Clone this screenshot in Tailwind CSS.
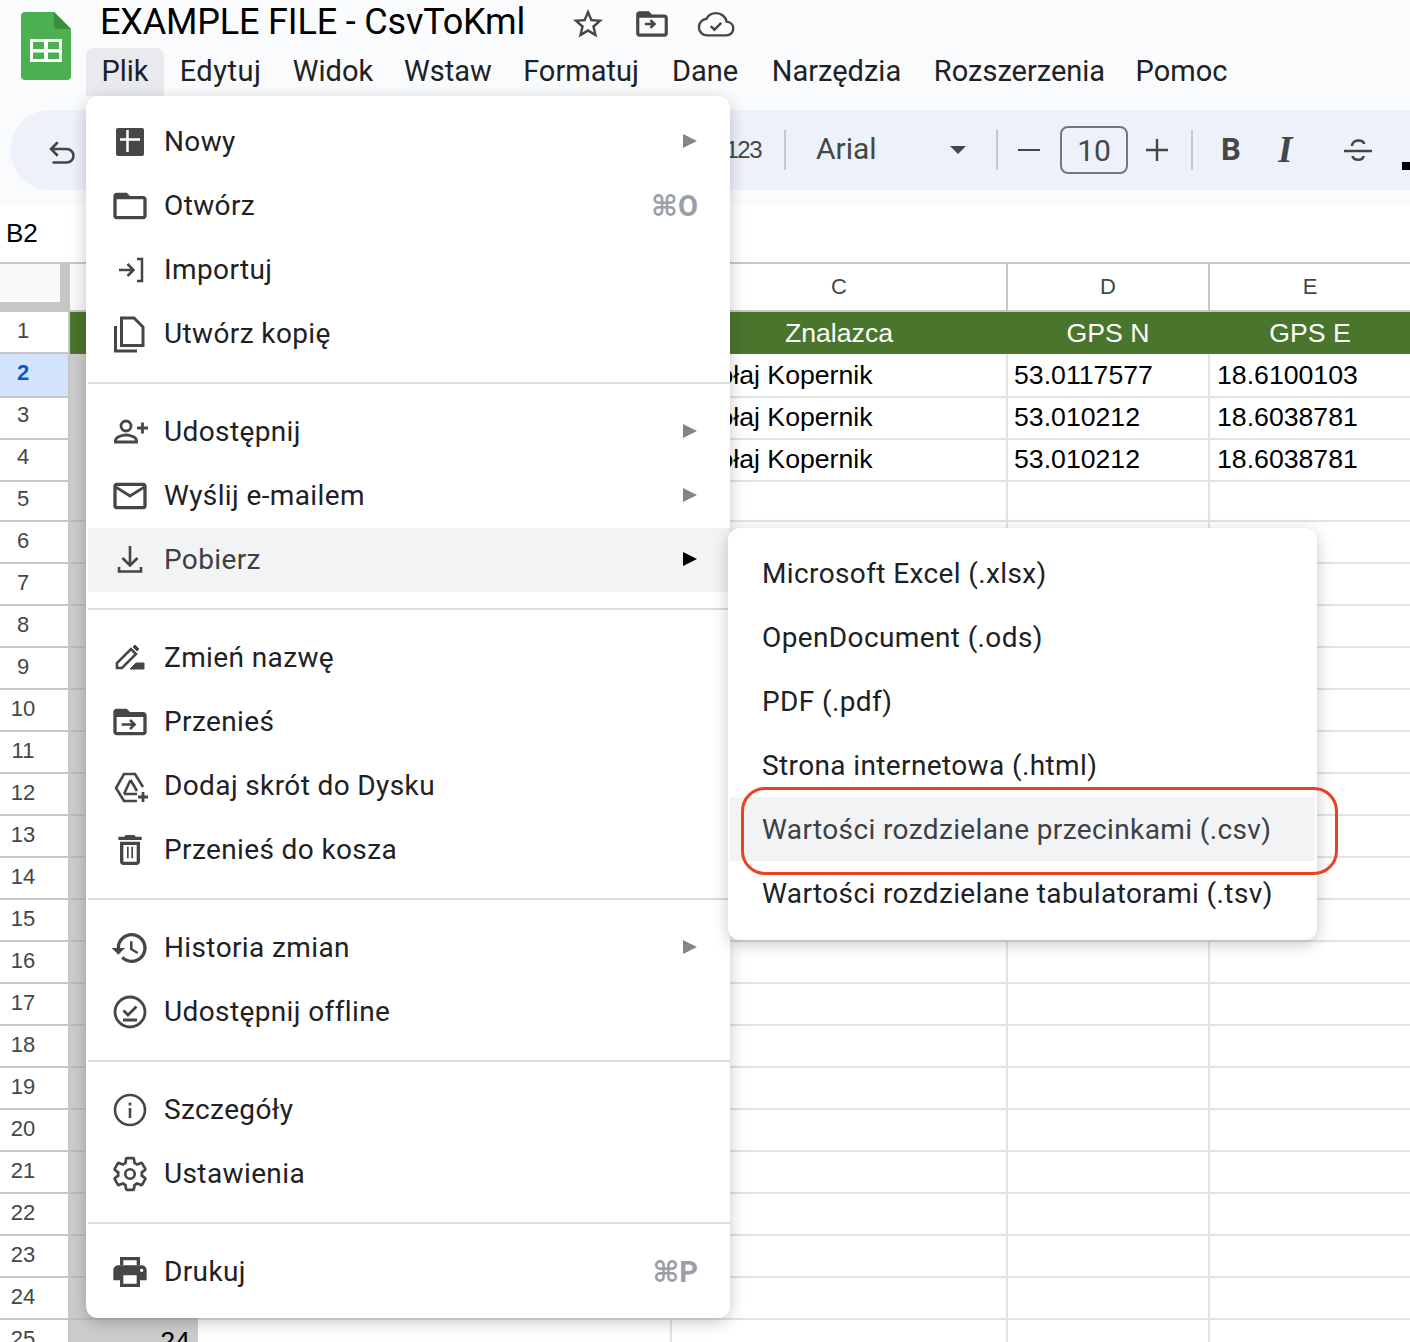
<!DOCTYPE html>
<html lang="pl">
<head>
    <meta charset="UTF-8">
    <title>EXAMPLE FILE - CsvToKml</title>
    <script src="https://cdn.jsdelivr.net/npm/@tailwindcss/browser@4"></script>
</head>
<body class="bg-white">
<div class="relative w-[1410px] h-[1342px] overflow-hidden font-['Roboto',sans-serif] text-[#202124]">

    <!-- header -->
    <header class="h-[206px] bg-[#f9fbfd] overflow-hidden">
        <div class="flex h-[96px]">
            <svg class="w-[50px] h-[68px] ml-[21px] mt-[12px] shrink-0" viewBox="0 0 50 68">
                <path d="M4 0H33L50 17V64a4 4 0 0 1-4 4H4a4 4 0 0 1-4-4V4a4 4 0 0 1 4-4z" fill="#4caf50"/>
                <path d="M33 0L50 17H37a4 4 0 0 1-4-4z" fill="#388e3c"/>
                <path d="M9 27H41V50H9z M12 30V37H23V30z M27 30V37H38V30z M12 40.500V47H23V40.500z M27 40.500V47H38V40.500z" fill="#fff" fill-rule="evenodd"/>
            </svg>
            <div class="ml-[15px]">
                <div class="flex items-center h-[48px]">
                    <span class="ml-[14px] text-[36px] tracking-[-0.17px] leading-[44px] text-black -mt-[4px]">EXAMPLE FILE - CsvToKml</span>
                    <svg class="w-[36px] h-[36px] ml-[45px] text-[#444746]" viewBox="0 0 24 24" fill="currentColor"><path d="M22 9.240l-7.190-.62L12 2 9.190 8.630 2 9.240l5.460 4.730L5.820 21 12 17.270 18.180 21l-1.630-7.030L22 9.240zM12 15.400l-3.760 2.270 1-4.280-3.320-2.880 4.380-.38L12 6.100l1.710 4.040 4.380.38-3.320 2.880 1 4.280L12 15.400z"/></svg>
                    <svg class="w-[38px] h-[38px] ml-[27px] text-[#444746]" viewBox="0 0 24 24" fill="currentColor"><path d="M20 6h-8l-2-2H4c-1.100 0-1.990.9-1.990 2L2 18c0 1.100.9 2 2 2h16c1.100 0 2-.9 2-2V8c0-1.100-.9-2-2-2zm0 12H4V8h16v10z"/><path d="M7.500 12h6M11 9.500l2.600 2.500L11 14.500" fill="none" stroke="currentColor" stroke-width="1.600"/></svg>
                    <svg class="w-[38px] h-[38px] ml-[26px] text-[#444746]" viewBox="0 0 24 24" fill="none" stroke="currentColor" stroke-width="1.500"><path d="M18.700 10.500C18.100 7.400 15.300 5.100 12 5.100 9.400 5.100 7.100 6.600 6 8.700 3.300 9 1.200 11.300 1.200 14c0 3 2.400 5.200 5.300 5.200h12c2.500 0 4.400-2 4.400-4.400 0-2.300-1.800-4.100-4.200-4.300z"/><path d="M8.700 13.300l2.300 2.300 4.300-4.300"/></svg>
                </div>
                <nav class="flex h-[48px] text-[29px] text-[#202124] text-center leading-[46px]">
                    <span class="w-[78px] bg-[#e8eaed] rounded-t-lg">Plik</span>
                    <span class="w-[113px] tracking-[0.5px]">Edytuj</span>
                    <span class="w-[112px]">Widok</span>
                    <span class="w-[118px]">Wstaw</span>
                    <span class="w-[148px]">Formatuj</span>
                    <span class="w-[100px]">Dane</span>
                    <span class="w-[163px]">Narzędzia</span>
                    <span class="w-[203px]">Rozszerzenia</span>
                    <span class="w-[121px]">Pomoc</span>
                </nav>
            </div>
        </div>
        <!-- toolbar -->
        <div class="flex items-center h-[80px] mt-[14px] ml-[10px] rounded-l-[40px] bg-[#edf2fa] text-[#444746] whitespace-nowrap">
            <svg class="w-[36px] h-[36px] ml-[35px] mt-[4px] shrink-0" viewBox="0 0 24 24" fill="none" stroke="currentColor" stroke-width="1.700"><path d="M8.500 5.500L4 10l4.500 4.500M4 10h10.500a4.500 4.500 0 0 1 0 9H5"/></svg>
            <span class="ml-[639px] font-['Liberation_Sans',sans-serif] text-[24px] tracking-[-1.5px] w-[41px] text-right">123</span>
            <span class="w-[2px] h-[40px] bg-[#c7c7c7] ml-[23px]"></span>
            <span class="ml-[30px] mb-[4px] w-[134px] text-[30px]">Arial</span>
            <span class="w-0 h-0 border-x-[8px] border-x-transparent border-t-[8px] border-t-[#444746]"></span>
            <span class="w-[2px] h-[40px] bg-[#c7c7c7] ml-[30px]"></span>
            <span class="w-[22px] h-[2.500px] bg-[#444746] ml-[20px]"></span>
            <span class="flex items-center justify-center w-[68px] h-[48px] ml-[20px] border-2 border-[#747775] rounded-lg text-[30px]">10</span>
            <svg class="w-[22px] h-[22px] ml-[18px]" viewBox="0 0 22 22" stroke="currentColor" stroke-width="2.400"><path d="M0 11H22M11 0V22"/></svg>
            <span class="w-[2px] h-[40px] bg-[#c7c7c7] ml-[23px]"></span>
            <span class="ml-[28px] w-[20px] text-[31px] font-bold">B</span>
            <span class="ml-[37px] w-[27px] text-[37px] font-bold italic font-['Liberation_Serif',serif]">I</span>
            <svg class="w-[36px] h-[36px] ml-[35px]" viewBox="0 0 36 36" fill="none" stroke="currentColor" stroke-width="2.600"><path d="M4 19H32M12 14c0-7 12-7 12-2M12.500 24c1 5 11 5 11 0"/></svg>
            <span class="w-[8px] h-[8px] bg-black mt-[32px] ml-[26px] shrink-0"></span>
        </div>
    </header>

    <!-- formula bar -->
    <div class="h-[56px] flex items-center pl-[6px] pb-[2px] bg-white font-['Liberation_Sans',sans-serif] text-[26px] text-black">B2</div>

    <!-- sheet -->
    <div id="sheet" class="font-['Liberation_Sans',sans-serif] border-t-2 border-[#c4c7c5]">
        <div class="grid grid-cols-[70px_128px_474px_336px_202px_200px] h-[48px] border-b-2 border-[#c4c7c5] text-[22px] text-[#444746] text-center leading-[45px]">
            <div class="bg-[#f8f9fa] border-r-[10px] border-b-[8px] border-[#c4c7c5]"></div>
            <div class="bg-[#f8f9fa]"></div>
            <div></div>
            <div class="border-r-2 border-[#c4c7c5]">C</div>
            <div class="border-r-2 border-[#c4c7c5]">D</div>
            <div>E</div>
        </div>
    </div>

    <!-- Plik menu -->
    <div class="absolute left-[86px] top-[96px] w-[644px] h-[1222px] py-[14px] pl-[2px] bg-white rounded-xl shadow-[0_4px_16px_rgba(0,0,0,0.22)] text-[28px] tracking-[0.38px] whitespace-nowrap">
        <div class="flex items-center h-[64px]">
            <svg class="w-[40px] h-[40px] ml-[22px] text-[#444746]" viewBox="0 0 40 40"><rect x="6" y="6" width="28" height="28" rx="2" fill="currentColor"/><path d="M10 17.500H30M17.500 8V30" stroke="#fff" stroke-width="2.500"/></svg>
            <span class="ml-[14px]">Nowy</span>
            <span class="ml-auto mr-[33px] -mt-[2px] w-0 h-0 border-y-[7px] border-y-transparent border-l-[14px] border-l-[#80868b]"></span>
        </div>
        <div class="flex items-center h-[64px]">
            <svg class="w-[40px] h-[40px] ml-[22px] text-[#444746]" viewBox="0 0 24 24" fill="currentColor"><path d="M20 6h-8l-2-2H4c-1.100 0-1.990.9-1.990 2L2 18c0 1.100.9 2 2 2h16c1.100 0 2-.9 2-2V8c0-1.100-.9-2-2-2zm0 12H4V8h16v10z"/></svg>
            <span class="ml-[14px]">Otwórz</span>
            <span class="ml-auto mr-[32px] mt-[2px] text-[#9aa0a6] font-bold font-['Roboto','DejaVu_Sans',sans-serif] text-[29px] tracking-normal">⌘O</span>
        </div>
        <div class="flex items-center h-[64px]">
            <svg class="w-[40px] h-[40px] ml-[22px] text-[#444746]" viewBox="0 0 40 40" fill="none" stroke="currentColor" stroke-width="2.500"><path d="M9 20H23M17.500 14L23.500 20L17.500 26M27 9H32V31H27"/></svg>
            <span class="ml-[14px]">Importuj</span>
        </div>
        <div class="flex items-center h-[64px]">
            <svg class="w-[40px] h-[40px] ml-[22px] text-[#444746]" viewBox="0 0 40 40" fill="none" stroke="currentColor" stroke-width="3"><path d="M5.500 12V37H27"/><path d="M11.500 4H24L33 13V31.500H11.500z"/></svg>
            <span class="ml-[14px]">Utwórz kopię</span>
        </div>
        <div class="h-[2px] my-4 bg-[#dadce0]"></div>
        <div class="flex items-center h-[64px]">
            <svg class="w-[40px] h-[40px] ml-[22px] text-[#444746]" viewBox="0 0 40 40" fill="none" stroke="currentColor" stroke-width="2.800"><circle cx="16" cy="14" r="5"/><path d="M5.500 30V28.500C5.500 25 12 23 16 23S26.500 25 26.500 28.500V30z"/><path d="M27 16H38M32.500 10.500V21.500"/></svg>
            <span class="ml-[14px]">Udostępnij</span>
            <span class="ml-auto mr-[33px] -mt-[2px] w-0 h-0 border-y-[7px] border-y-transparent border-l-[14px] border-l-[#80868b]"></span>
        </div>
        <div class="flex items-center h-[64px]">
            <svg class="w-[40px] h-[40px] ml-[22px] text-[#444746]" viewBox="0 0 24 24" fill="currentColor"><path d="M20 4H4c-1.100 0-1.990.9-1.990 2L2 18c0 1.100.9 2 2 2h16c1.100 0 2-.9 2-2V6c0-1.100-.9-2-2-2zm0 14H4V8l8 5 8-5v10zm-8-7L4 6h16l-8 5z"/></svg>
            <span class="ml-[14px]">Wyślij e-mailem</span>
            <span class="ml-auto mr-[33px] -mt-[2px] w-0 h-0 border-y-[7px] border-y-transparent border-l-[14px] border-l-[#80868b]"></span>
        </div>
        <div class="flex items-center h-[64px] bg-[#f1f3f4] text-[#3c4043]">
            <svg class="w-[40px] h-[40px] ml-[22px] text-[#444746]" viewBox="0 0 40 40" fill="none" stroke="currentColor" stroke-width="2.600"><path d="M20 6V25M12.500 18L20 25.500L27.500 18M9 27V31.500H31V27"/></svg>
            <span class="ml-[14px]">Pobierz</span>
            <span class="ml-auto mr-[33px] -mt-[2px] w-0 h-0 border-y-[7px] border-y-transparent border-l-[14px] border-l-black"></span>
        </div>
        <div class="h-[2px] my-4 bg-[#dadce0]"></div>
        <div class="flex items-center h-[64px]">
            <svg class="w-[40px] h-[40px] ml-[22px] text-[#444746]" viewBox="0 0 40 40"><path d="M7 30V25L21 11L26 16L12 30z" fill="none" stroke="currentColor" stroke-width="2.600"/><path d="M23 9L25 7L29 11L27 13z M20 31L26 25H34V31z" fill="currentColor" stroke="currentColor" stroke-width="1"/></svg>
            <span class="ml-[14px]">Zmień nazwę</span>
        </div>
        <div class="flex items-center h-[64px]">
            <svg class="w-[40px] h-[40px] ml-[22px] text-[#444746]" viewBox="0 0 24 24" fill="currentColor"><path d="M20 6h-8l-2-2H4c-1.100 0-1.990.9-1.990 2L2 18c0 1.100.9 2 2 2h16c1.100 0 2-.9 2-2V8c0-1.100-.9-2-2-2zm0 12H4V9h16v9z"/><path d="M7 13.500h8M12 10.800l2.800 2.700L12 16.200" fill="none" stroke="currentColor" stroke-width="1.500"/></svg>
            <span class="ml-[14px]">Przenieś</span>
        </div>
        <div class="flex items-center h-[64px]">
            <svg class="w-[40px] h-[40px] ml-[22px] text-[#444746]" viewBox="0 0 40 40" fill="none" stroke="currentColor" stroke-width="2.600"><path d="M27 35H14L6 22L14 8H25L33 21"/><path d="M14 28H27M20.500 14L14 28M20.500 14L27 25"/><path d="M28 31H38M33 26V36" stroke-width="2.800"/></svg>
            <span class="ml-[14px]">Dodaj skrót do Dysku</span>
        </div>
        <div class="flex items-center h-[64px]">
            <svg class="w-[40px] h-[40px] ml-[22px] text-[#444746]" viewBox="0 0 24 24" fill="currentColor"><path d="M6 19c0 1.100.9 2 2 2h8c1.100 0 2-.9 2-2V7H6v12zM8 9h8v10H8V9zm7.500-5l-1-1h-5l-1 1H5v2h14V4z"/><path d="M10.200 10h1v7h-1zM12.800 10h1v7h-1z"/></svg>
            <span class="ml-[14px]">Przenieś do kosza</span>
        </div>
        <div class="h-[2px] my-4 bg-[#dadce0]"></div>
        <div class="flex items-center h-[64px]">
            <svg class="w-[40px] h-[40px] ml-[22px] text-[#444746]" viewBox="0 0 24 24" fill="currentColor"><path d="M13 3c-4.970 0-9 4.030-9 9H1l3.890 3.890.07.14L9 12H6c0-3.870 3.130-7 7-7s7 3.130 7 7-3.130 7-7 7c-1.930 0-3.680-.79-4.940-2.060l-1.420 1.420C8.270 19.990 10.510 21 13 21c4.970 0 9-4.030 9-9s-4.030-9-9-9zm-1 5v5l4.280 2.540.72-1.210-3.500-2.080V8H12z"/></svg>
            <span class="ml-[14px]">Historia zmian</span>
            <span class="ml-auto mr-[33px] -mt-[2px] w-0 h-0 border-y-[7px] border-y-transparent border-l-[14px] border-l-[#80868b]"></span>
        </div>
        <div class="flex items-center h-[64px]">
            <svg class="w-[40px] h-[40px] ml-[22px] text-[#444746]" viewBox="0 0 40 40" fill="none" stroke="currentColor" stroke-width="2.800"><circle cx="20" cy="20" r="15"/><path d="M13.500 18.500L18 23L26.500 14.500M13 28H27"/></svg>
            <span class="ml-[14px]">Udostępnij offline</span>
        </div>
        <div class="h-[2px] my-4 bg-[#dadce0]"></div>
        <div class="flex items-center h-[64px]">
            <svg class="w-[40px] h-[40px] ml-[22px] text-[#444746]" viewBox="0 0 40 40" fill="none" stroke="currentColor" stroke-width="2.600"><circle cx="20" cy="20" r="15"/><path d="M20 18V28M20 12.500V15.500"/></svg>
            <span class="ml-[14px]">Szczegóły</span>
        </div>
        <div class="flex items-center h-[64px]">
            <svg class="w-[38px] h-[38px] ml-[23px] mr-[1px] text-[#444746]" viewBox="0 0 24 24" fill="none" stroke="currentColor" stroke-width="1.700"><path d="M19.430 12.980c.04-.32.07-.64.07-.98s-.03-.66-.07-.98l2.110-1.650c.19-.15.24-.42.12-.64l-2-3.460c-.12-.22-.39-.3-.61-.22l-2.490 1c-.52-.4-1.080-.73-1.690-.98l-.38-2.650C14.460 2.180 14.250 2 14 2h-4c-.25 0-.46.18-.49.42l-.38 2.650c-.61.25-1.170.59-1.690.98l-2.490-1c-.23-.09-.49 0-.61.22l-2 3.460c-.13.22-.07.49.12.64l2.110 1.650c-.04.32-.07.65-.07.98s.03.66.07.98l-2.110 1.650c-.19.15-.24.42-.12.64l2 3.460c.12.22.39.3.61.22l2.490-1c.52.4 1.080.73 1.690.98l.38 2.650c.03.24.24.42.49.42h4c.25 0 .46-.18.49-.42l.38-2.650c.61-.25 1.170-.59 1.690-.98l2.490 1c.23.09.49 0 .61-.22l2-3.460c.12-.22.07-.49-.12-.64l-2.110-1.650z"/><circle cx="12" cy="12" r="3"/></svg>
            <span class="ml-[14px]">Ustawienia</span>
        </div>
        <div class="h-[2px] my-4 bg-[#dadce0]"></div>
        <div class="flex items-center h-[64px]">
            <svg class="w-[40px] h-[40px] ml-[22px] text-[#444746]" viewBox="0 0 24 24" fill="currentColor"><path fill-rule="evenodd" d="M19 8H5c-1.660 0-3 1.340-3 3v6h4v4h12v-4h4v-6c0-1.660-1.340-3-3-3zm-3 11H8v-5h8v5zm3-7c-.55 0-1-.45-1-1s.45-1 1-1 1 .45 1 1-.45 1-1 1z"/><path fill-rule="evenodd" d="M18 3H6v5h12V3zM16 5H8v3h8V5z"/></svg>
            <span class="ml-[14px]">Drukuj</span>
            <span class="ml-auto mr-[32px] mt-[2px] text-[#9aa0a6] font-bold font-['Roboto','DejaVu_Sans',sans-serif] text-[29px] tracking-normal">⌘P</span>
        </div>
    </div>

    <!-- Pobierz submenu -->
    <div class="absolute left-[728px] top-[528px] w-[589px] h-[412px] pt-[13px] px-[2px] bg-white rounded-xl shadow-[0_4px_16px_rgba(0,0,0,0.22)] text-[28px] tracking-[0.38px] whitespace-nowrap">
        <div class="flex items-center h-[64px] pl-[32px] pt-[2px]">Microsoft Excel (.xlsx)</div>
        <div class="flex items-center h-[64px] pl-[32px] pt-[2px]">OpenDocument (.ods)</div>
        <div class="flex items-center h-[64px] pl-[32px] pt-[2px]">PDF (.pdf)</div>
        <div class="flex items-center h-[64px] pl-[32px] pt-[2px]">Strona internetowa (.html)</div>
        <div class="flex items-center h-[64px] pl-[32px] pt-[2px] bg-[#f1f3f4] text-[#3c4043]">Wartości rozdzielane przecinkami (.csv)</div>
        <div class="flex items-center h-[64px] pl-[32px] pt-[2px]">Wartości rozdzielane tabulatorami (.tsv)</div>
    </div>

    <!-- red highlight round the csv item -->
    <div class="absolute left-[741px] top-[787px] w-[597px] h-[88px] border-[3px] border-[#ea4025] rounded-[24px]"></div>
</div>

<script>
    // wiersze arkusza
    const rows = { 2: ['Mikołaj Kopernik', '53.0117577', '18.6100103'], 3: ['Mikołaj Kopernik', '53.010212', '18.6038781'], 4: ['Mikołaj Kopernik', '53.010212', '18.6038781'] };
    const sheet = document.getElementById('sheet');

    for (let n = 1; n <= 25; n++) {
        const data = rows[n] || ['', '', ''];
        if (n === 1) {
            sheet.innerHTML += `
                <div class="grid grid-cols-[70px_128px_474px_336px_202px_200px] h-[42px] text-[26.67px] leading-[42px] text-center">
                    <div class="border-r-2 border-b-2 border-[#c4c7c5] text-[22px] text-[#444746] leading-[38px] pr-[22px]">1</div>
                    <div class="bg-[#4a752c]"></div>
                    <div class="bg-[#4a752c]"></div>
                    <div class="bg-[#4a752c] text-white pr-[2px]">Znalazca</div>
                    <div class="bg-[#4a752c] text-white pr-[2px]">GPS N</div>
                    <div class="bg-[#4a752c] text-white">GPS E</div>
                </div>`;
            continue;
        }
        const head = n === 2
            ? 'bg-[#d3e3fd] text-[#0b57d0] font-bold'
            : 'text-[#444746]';
        sheet.innerHTML += `
            <div class="grid grid-cols-[70px_128px_474px_336px_202px_200px] h-[42px] text-[26.67px] leading-[42px] text-black">
                <div class="${head} border-r-2 border-b-2 border-[#c4c7c5] text-[22px] text-center leading-[38px] pr-[22px]">${n}</div>
                <div class="bg-[#cccccc] border-b-2 border-[#bdbdbd] text-right pr-[8px]">${n === 25 ? 24 : ''}</div>
                <div class="border-r-2 border-b-2 border-[#e1e3e1]"></div>
                <div class="border-r-2 border-b-2 border-[#e1e3e1] pl-[5px] whitespace-nowrap overflow-hidden">${data[0]}</div>
                <div class="border-r-2 border-b-2 border-[#e1e3e1] pl-[6px]">${data[1]}</div>
                <div class="border-b-2 border-[#e1e3e1] pl-[7px]">${data[2]}</div>
            </div>`;
    }
</script>
</body>
</html>
